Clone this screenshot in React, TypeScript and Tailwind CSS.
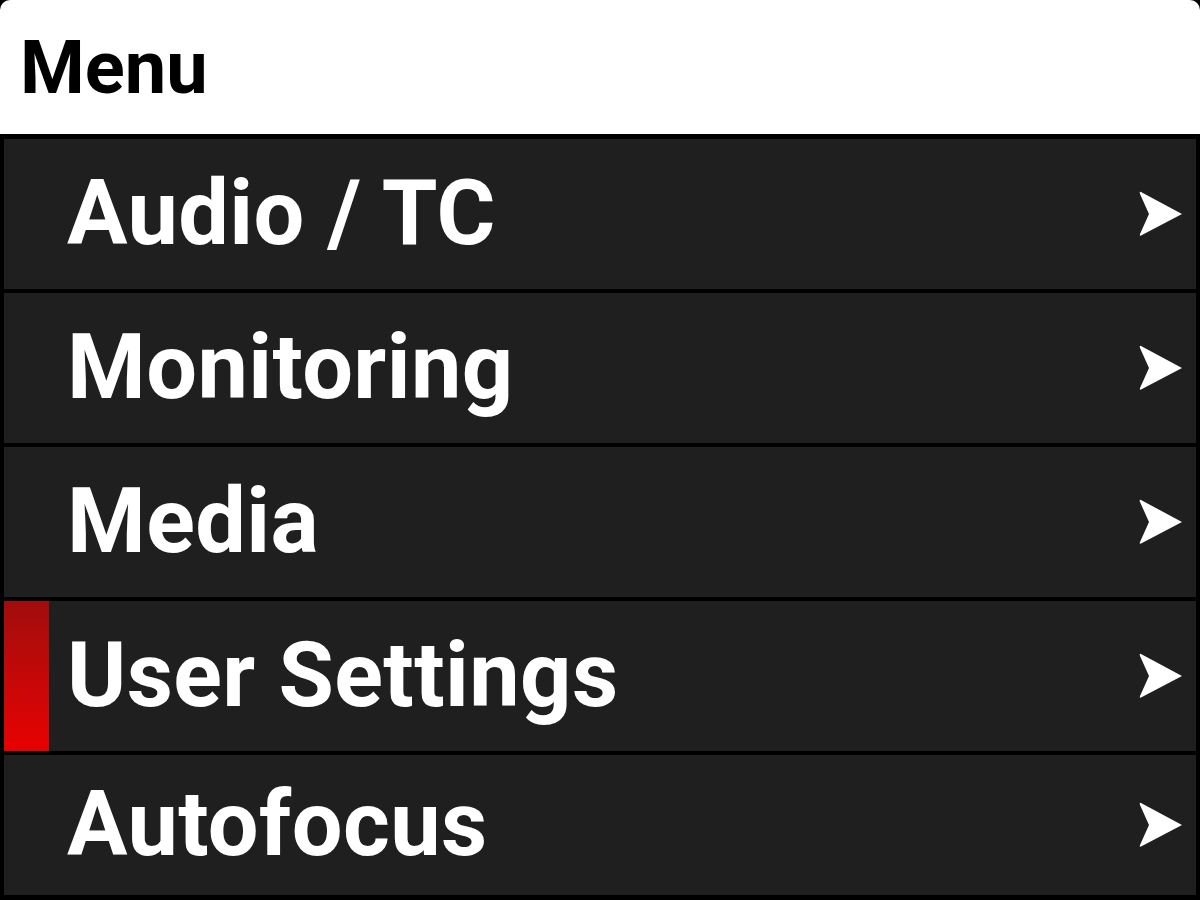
const items = ["Audio / TC", "Monitoring", "Media", "User Settings", "Autofocus"];
const activeItem = "User Settings";

function Chevron() {
  return (
    <svg width="46" height="48" viewBox="0 0 46 48" className="shrink-0">
      <path d="M3 2 Q1 1 2 4 L11 24 L2 44 Q1 47 4 45 L44 24 Z" fill="#ffffff" />
    </svg>
  );
}

export default function App() {
  return (
    <div
      className="flex h-[900px] w-[1200px] flex-col overflow-hidden bg-black"
      style={{ fontFamily: "Roboto, 'Liberation Sans', sans-serif" }}
    >
      <div className="flex h-[134px] shrink-0 items-center rounded-t-[10px] bg-white pt-[2px] pl-[20px]">
        <span className="text-[74px] leading-none font-bold text-black">Menu</span>
      </div>

      <div className="mt-[5px] flex flex-1 flex-col gap-[4px] pr-[4px] pb-[5px] pl-[4px]">
        {items.map((label, i) => {
          const active = label === activeItem;
          return (
            <div
              key={label}
              className={`relative flex items-center justify-between bg-[#1f1f1f] pr-[12px] pl-[63px] ${
                i === items.length - 1 ? "flex-1" : "h-[150px] shrink-0"
              }`}
            >
              {active && (
                <div className="absolute top-0 bottom-0 left-0 w-[45px] bg-gradient-to-b from-[#a10c0c] to-[#e80000]" />
              )}
              <span className="text-[90px] leading-none font-bold tracking-[0.4px] text-white">{label}</span>
              <Chevron />
            </div>
          );
        })}
      </div>
    </div>
  );
}
